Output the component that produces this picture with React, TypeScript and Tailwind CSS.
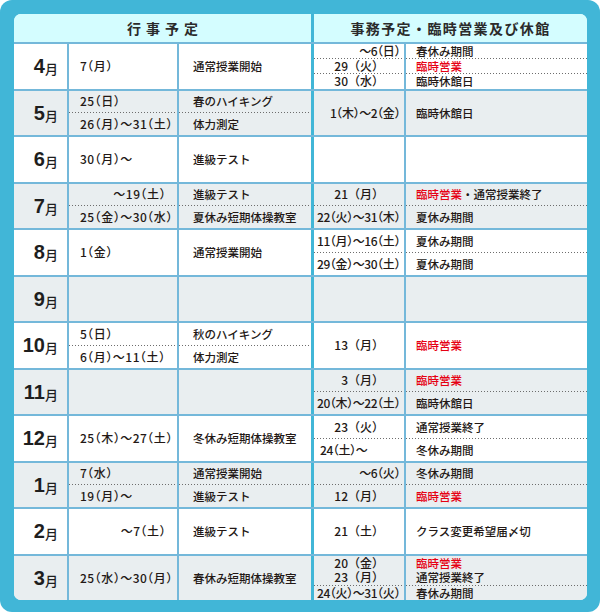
import type { ReactNode } from "react";

type Item = {
  d?: string;
  a?: "l" | "r" | "m";
  e?: ReactNode;
  nosep?: boolean;
};

type Row = { m: string; left: Item[]; right: Item[] };

const Red = ({ children }: { children: ReactNode }) => (
  <span className="text-[#e60012]">{children}</span>
);

const rows: Row[] = [
  {
    m: "4",
    left: [{ d: "7(月)", a: "l", e: "通常授業開始" }],
    right: [
      { d: "～6(日)", a: "r", e: "春休み期間" },
      { d: "29(火)", a: "m", e: <Red>臨時営業</Red> },
      { d: "30(水)", a: "m", e: "臨時休館日" },
    ],
  },
  {
    m: "5",
    left: [
      { d: "25(日)", a: "l", e: "春のハイキング" },
      { d: "26(月)～31(土)", a: "l", e: "体力測定" },
    ],
    right: [{ d: "1(木)～2(金)", a: "r", e: "臨時休館日" }],
  },
  {
    m: "6",
    left: [{ d: "30(月)～", a: "l", e: "進級テスト" }],
    right: [{}],
  },
  {
    m: "7",
    left: [
      { d: "～19(土)", a: "r", e: "進級テスト" },
      { d: "25(金)～30(水)", a: "l", e: "夏休み短期体操教室" },
    ],
    right: [
      {
        d: "21(月)",
        a: "m",
        e: (
          <>
            <Red>臨時営業</Red>・通常授業終了
          </>
        ),
      },
      { d: "22(火)～31(木)", a: "r", e: "夏休み期間" },
    ],
  },
  {
    m: "8",
    left: [{ d: "1(金)", a: "l", e: "通常授業開始" }],
    right: [
      { d: "11(月)～16(土)", a: "r", e: "夏休み期間" },
      { d: "29(金)～30(土)", a: "r", e: "夏休み期間" },
    ],
  },
  { m: "9", left: [{}], right: [{}] },
  {
    m: "10",
    left: [
      { d: "5(日)", a: "l", e: "秋のハイキング" },
      { d: "6(月)～11(土)", a: "l", e: "体力測定" },
    ],
    right: [{ d: "13(月)", a: "m", e: <Red>臨時営業</Red> }],
  },
  {
    m: "11",
    left: [{}],
    right: [
      { d: "3(月)", a: "m", e: <Red>臨時営業</Red> },
      { d: "20(木)～22(土)", a: "r", e: "臨時休館日" },
    ],
  },
  {
    m: "12",
    left: [{ d: "25(木)～27(土)", a: "l", e: "冬休み短期体操教室" }],
    right: [
      { d: "23(火)", a: "m", e: "通常授業終了" },
      { d: "24(土)～", a: "l", e: "冬休み期間" },
    ],
  },
  {
    m: "1",
    left: [
      { d: "7(水)", a: "l", e: "通常授業開始" },
      { d: "19(月)～", a: "l", e: "進級テスト" },
    ],
    right: [
      { d: "～6(火)", a: "r", e: "冬休み期間" },
      { d: "12(月)", a: "m", e: <Red>臨時営業</Red> },
    ],
  },
  {
    m: "2",
    left: [{ d: "～7(土)", a: "r", e: "進級テスト" }],
    right: [{ d: "21(土)", a: "m", e: "クラス変更希望届〆切" }],
  },
  {
    m: "3",
    left: [{ d: "25(水)～30(月)", a: "l", e: "春休み短期体操教室" }],
    right: [
      { d: "20(金)", a: "m", e: <Red>臨時営業</Red> },
      { d: "23(月)", a: "m", e: "通常授業終了", nosep: true },
      { d: "24(火)～31(火)", a: "r", e: "春休み期間" },
    ],
  },
];

// full-width parens; 'halt' turns them into the half-width alternates where needed
const fmt = (d?: string) => (d ? d.replace(/\(/g, "（").replace(/\)/g, "）") : "");
const isRange = (d?: string) => !!d && d.includes("～");

const Dots = () => (
  <div className="h-px shrink-0 bg-[linear-gradient(to_right,#6d6d6d_1px,transparent_1px)] bg-[length:3px_1px] bg-repeat-x" />
);

function Stack({
  items,
  render,
}: {
  items: Item[];
  render: (it: Item) => ReactNode;
}) {
  return (
    <div className="flex h-full flex-col">
      {items.map((it, i) => (
        <div key={i} className="contents">
          {i > 0 && !it.nosep && <Dots />}
          {render(it)}
        </div>
      ))}
    </div>
  );
}

const leftDate = (it: Item) => (
  <div
    className={
      it.a === "r"
        ? "flex flex-1 items-center justify-end pr-[11px]"
        : "flex flex-1 items-center pl-[11px]"
    }
  >
    <span className="inline-block h-[12px] whitespace-nowrap leading-[12px] tracking-[0.5px] [font-feature-settings:'halt']">
      {fmt(it.d)}
    </span>
  </div>
);

const rightDate = (it: Item) => (
  <div
    className={
      it.a === "l"
        ? "flex flex-1 items-center pl-[6px]"
        : it.a === "m"
          ? "flex flex-1 items-center justify-end pr-[20px]"
          : "flex flex-1 items-center justify-end pr-[4px]"
    }
  >
    <span
      className={
        "inline-block h-[12px] whitespace-nowrap leading-[12px] " +
        (isRange(it.d) ? "tracking-[-0.4px] [font-feature-settings:'halt']" : "")
      }
    >
      {fmt(it.d)}
    </span>
  </div>
);

const EventText = ({ e }: { e?: ReactNode }) => (
  <span className="inline-block h-[12px] whitespace-nowrap leading-[12px]">{e}</span>
);

const leftEvent = (it: Item) => (
  <div className="flex flex-1 items-center pl-[14px]">
    <EventText e={it.e} />
  </div>
);

const rightEvent = (it: Item) => (
  <div className="flex flex-1 items-center pl-[10px]">
    <EventText e={it.e} />
  </div>
);

export default function App() {
  return (
    <div className="h-[614px] w-[600px] bg-white">
      <div className="h-[612px] w-[600px] rounded-[12px] bg-[#41b6d7] pb-[12px] pl-[14px] pr-[13px] pt-[14px]">
        <div
          className="flex h-full flex-col overflow-hidden rounded-[7px] bg-white text-[11.5px] font-medium leading-none text-[#231815]"
          style={{ fontFamily: '"Noto Sans CJK JP", "Noto Sans", sans-serif' }}
        >
          {/* header */}
          <div className="box-content flex h-[28px] shrink-0 border-b-2 border-[#74b8da] bg-[#d4fdff] text-[14px] font-bold text-[#2b2b2b]">
            <div className="flex w-[297px] items-center justify-center pl-[5px] tracking-[5px]">
              行事予定
            </div>
            <div className="w-[3px] bg-[#41b6d7]" />
            <div className="flex flex-1 items-center justify-center tracking-[1.4px]">
              事務予定・臨時営業及び休館
            </div>
          </div>

          {/* body */}
          {rows.map((r, i) => (
            <div
              key={r.m}
              className={
                "flex flex-1 " +
                (i > 0 ? "border-t-2 border-[#74b8da] " : "") +
                (i % 2 === 1 ? "bg-[#e9eef0]" : "bg-white")
              }
            >
              <div className="flex w-[53px] items-center justify-end pr-[9px] text-[#1e1e1e]">
                <span
                  className="text-[20px] font-bold"
                  style={{ fontFamily: '"Liberation Sans", Arial, sans-serif' }}
                >
                  {r.m}
                </span>
                <span className="pt-[5px] text-[13px]">月</span>
              </div>
              <div className="w-[2px] bg-[#74b8da]" />
              <div className="w-[108px] text-[12px]">
                <Stack items={r.left} render={leftDate} />
              </div>
              <div className="w-[2px] bg-[#74b8da]" />
              <div className="w-[132px]">
                <Stack items={r.left} render={leftEvent} />
              </div>
              <div className="w-[3px] bg-[#41b6d7]" />
              <div className="w-[90px] text-[12px]">
                <Stack items={r.right} render={rightDate} />
              </div>
              <div className="w-[2px] bg-[#74b8da]" />
              <div className="flex-1">
                <Stack items={r.right} render={rightEvent} />
              </div>
            </div>
          ))}
        </div>
      </div>
    </div>
  );
}
